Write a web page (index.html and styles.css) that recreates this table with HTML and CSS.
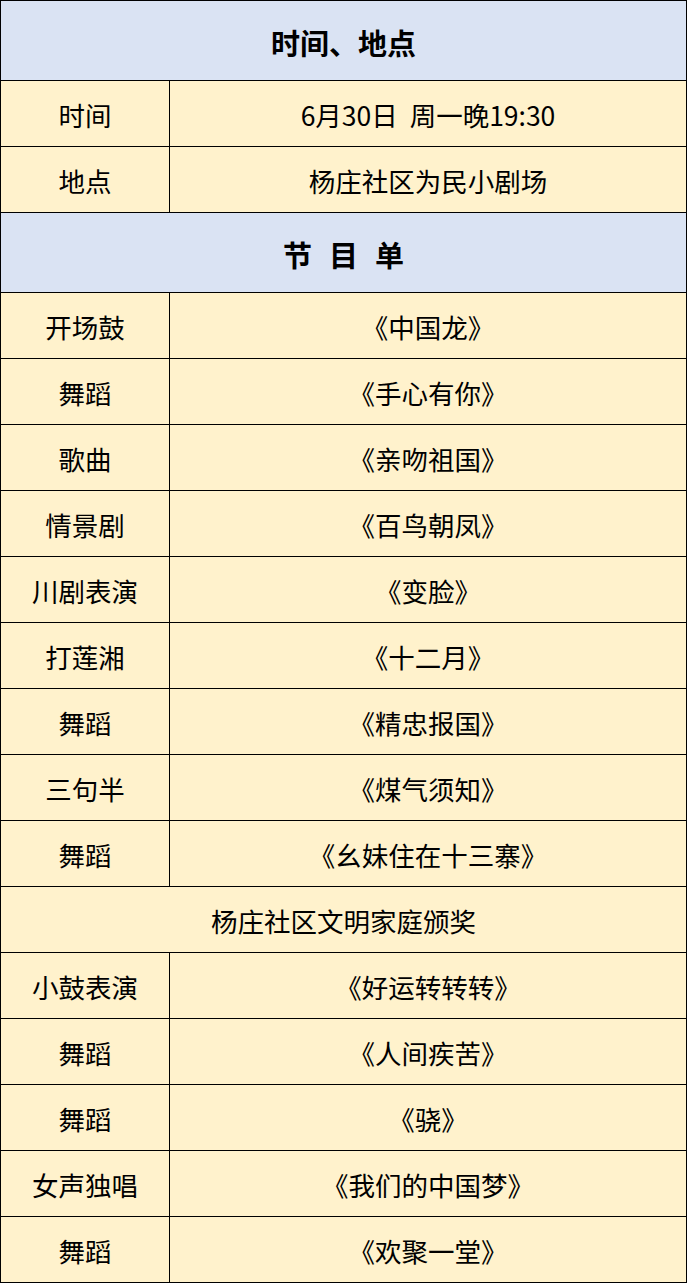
FILE: index.html
```html
<!DOCTYPE html>
<html lang="zh-CN">
<head>
<meta charset="utf-8">
<link rel="stylesheet" href="styles.css">
<title>节目单</title>
</head>
<body>
<div class="sheet">
  <div class="cell head span">时间、地点</div>
  <div class="cell">时间</div><div class="cell">6月30日&nbsp; 周一晚19:30</div>
  <div class="cell">地点</div><div class="cell">杨庄社区为民小剧场</div>
  <div class="cell head span"><span class="spaced"><span>节</span><span>目</span><span>单</span></span></div>
  <div class="cell">开场鼓</div><div class="cell">《中国龙》</div>
  <div class="cell">舞蹈</div><div class="cell">《手心有你》</div>
  <div class="cell">歌曲</div><div class="cell">《亲吻祖国》</div>
  <div class="cell">情景剧</div><div class="cell">《百鸟朝凤》</div>
  <div class="cell">川剧表演</div><div class="cell">《变脸》</div>
  <div class="cell">打莲湘</div><div class="cell">《十二月》</div>
  <div class="cell">舞蹈</div><div class="cell">《精忠报国》</div>
  <div class="cell">三句半</div><div class="cell">《煤气须知》</div>
  <div class="cell">舞蹈</div><div class="cell">《幺妹住在十三寨》</div>
  <div class="cell span">杨庄社区文明家庭颁奖</div>
  <div class="cell">小鼓表演</div><div class="cell">《好运转转转》</div>
  <div class="cell">舞蹈</div><div class="cell">《人间疾苦》</div>
  <div class="cell">舞蹈</div><div class="cell">《骁》</div>
  <div class="cell">女声独唱</div><div class="cell">《我们的中国梦》</div>
  <div class="cell">舞蹈</div><div class="cell">《欢聚一堂》</div>
</div>
</body>
</html>
```
FILE: styles.css
```css
* { box-sizing: border-box; }
html, body { margin: 0; padding: 0; background: #ffffff; }
body {
  font-family: "Noto Sans CJK SC", "Liberation Serif", sans-serif;
  color: #000;
}
.sheet {
  width: 687px;
  display: grid;
  grid-template-columns: 169px 517px;
  grid-template-rows: 80px 66px 66px 80px repeat(15, 66px);
  border-left: 1px solid #000;
  border-top: 1px solid #000;
  background: #FFF2CC;
}
.cell {
  display: flex;
  align-items: center;
  justify-content: center;
  padding-top: 3px;
  border-right: 1px solid #000;
  border-bottom: 1px solid #000;
  font-size: 26.5px;
  line-height: 1;
  white-space: nowrap;
}
.span { grid-column: 1 / 3; }
.head {
  background: #DAE3F3;
  font-size: 29px;
  font-weight: bold;
}
.spaced { display: inline-flex; gap: 17px; }
```
